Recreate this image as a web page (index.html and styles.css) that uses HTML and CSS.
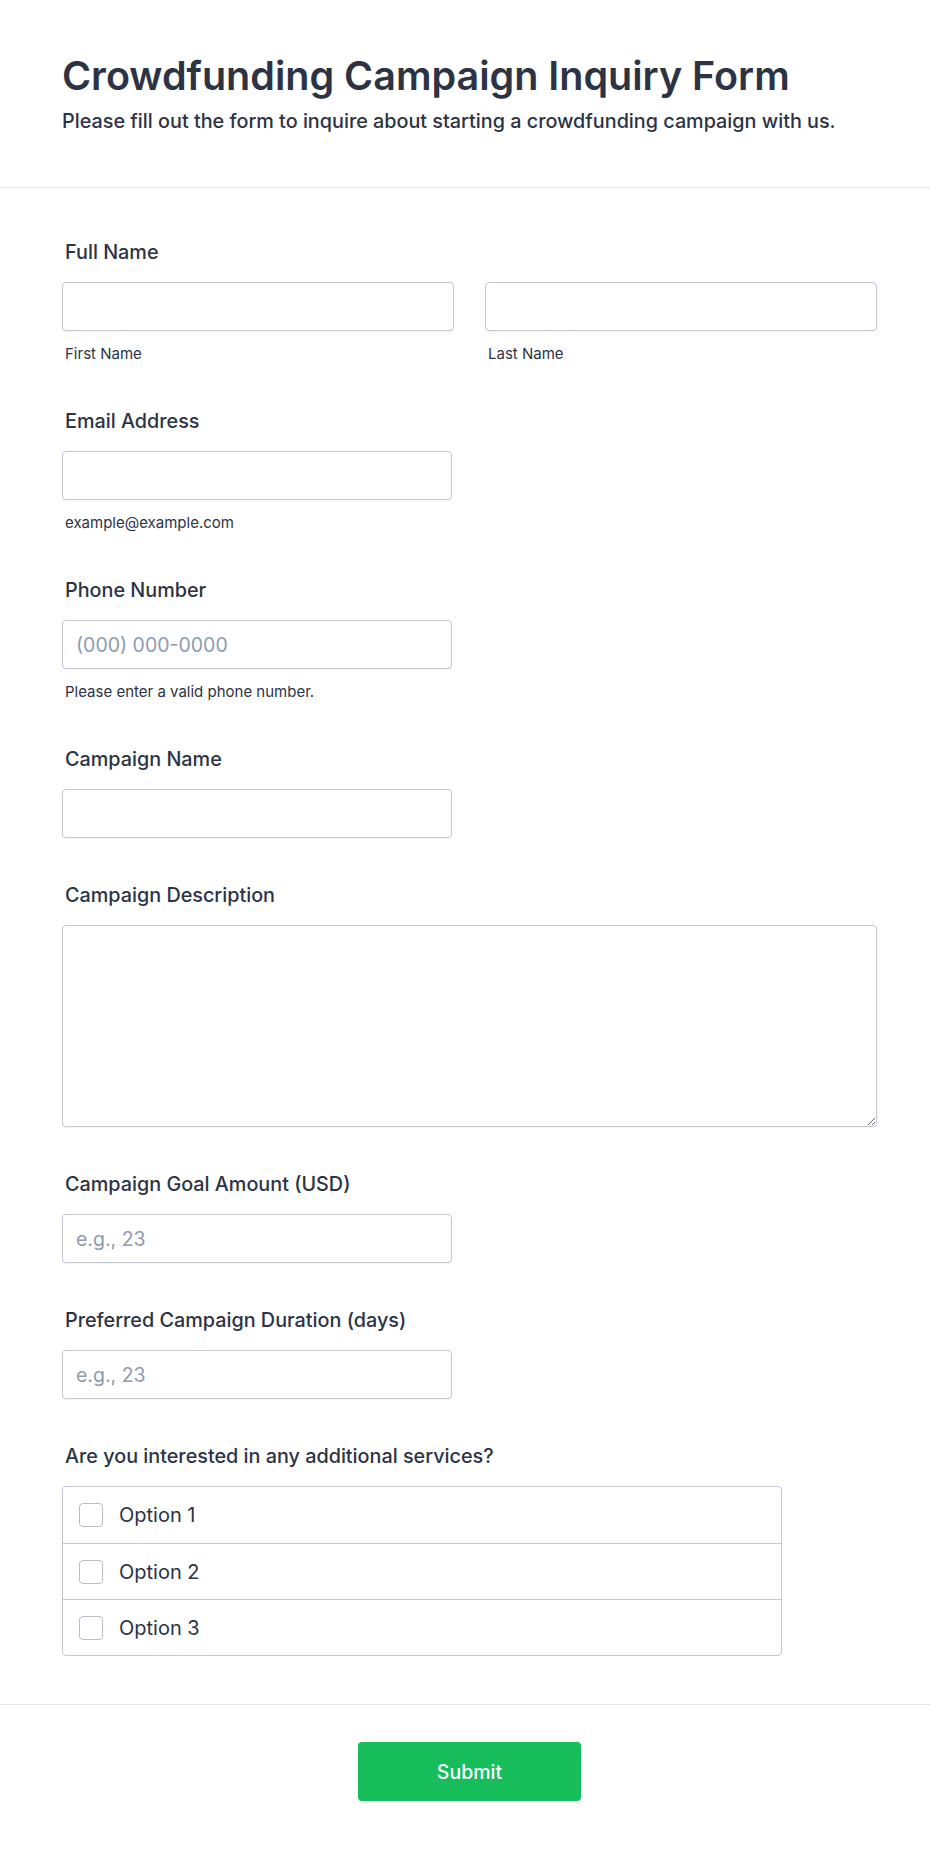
FILE: index.html
```html
<!DOCTYPE html>
<html lang="en">
<head>
  <meta charset="UTF-8" />
  <meta name="viewport" content="width=device-width, initial-scale=1.0"/>
  <title>Crowdfunding Campaign Inquiry Form</title>
  <link rel="stylesheet" href="styles.css">
</head>
<body>

  <header class="form-header">
    <h1>Crowdfunding Campaign Inquiry Form</h1>
    <p>Please fill out the form to inquire about starting a crowdfunding campaign with us.</p>
  </header>

  <form class="form-body">
    <!-- Jméno -->
    <div class="field">
      <label class="field-label">Full Name</label>
      <div class="name-row">
        <div>
          <input type="text" id="firstName">
          <span class="sublabel">First Name</span>
        </div>
        <div>
          <input type="text" id="lastName">
          <span class="sublabel">Last Name</span>
        </div>
      </div>
    </div>

    <div class="field">
      <label class="field-label" for="email">Email Address</label>
      <input type="email" id="email" class="half">
      <span class="sublabel">example@example.com</span>
    </div>

    <div class="field">
      <label class="field-label" for="phone">Phone Number</label>
      <input type="tel" id="phone" class="half" placeholder="(000) 000-0000">
      <span class="sublabel">Please enter a valid phone number.</span>
    </div>

    <div class="field">
      <label class="field-label" for="campaignName">Campaign Name</label>
      <input type="text" id="campaignName" class="half">
    </div>

    <div class="field">
      <label class="field-label" for="description">Campaign Description</label>
      <textarea id="description"></textarea>
    </div>

    <div class="field">
      <label class="field-label" for="goal">Campaign Goal Amount (USD)</label>
      <input type="number" id="goal" class="half" placeholder="e.g., 23">
    </div>

    <div class="field">
      <label class="field-label" for="duration">Preferred Campaign Duration (days)</label>
      <input type="number" id="duration" class="half" placeholder="e.g., 23">
    </div>

    <div class="field">
      <label class="field-label">Are you interested in any additional services?</label>
      <div class="options">
        <label class="option"><input type="checkbox"><span>Option 1</span></label>
        <label class="option"><input type="checkbox"><span>Option 2</span></label>
        <label class="option"><input type="checkbox"><span>Option 3</span></label>
      </div>
    </div>
  </form>

  <!-- Odeslání -->
  <div class="form-footer">
    <button type="submit">Submit</button>
  </div>

</body>
</html>
```

FILE: styles.css
```css
* {
  margin: 0;
  padding: 0;
  box-sizing: border-box;
}

body {
  font-family: Inter, 'Noto Sans', sans-serif;
  color: #2c3345;
  background: #fff;
}

.form-header {
  padding: 52px 53px 52px 62px;
  border-bottom: 1px solid #e3e5ea;
}

.form-header h1 {
  font-size: 39.5px;
  line-height: 48px;
  font-weight: 600;
}

.form-header p {
  margin-top: 7px;
  font-size: 19.8px;
  line-height: 28px;
  font-weight: 500;
}

.form-body {
  display: flex;
  flex-direction: column;
  gap: 45px;
  padding: 52px 53px 48px 62px;
  border-bottom: 1px solid #e3e5ea;
}

.field {
  display: flex;
  flex-direction: column;
}

.field-label {
  padding-left: 3px;
  font-size: 19.8px;
  line-height: 24px;
  font-weight: 500;
  margin-bottom: 18px;
}

.name-row {
  display: grid;
  grid-template-columns: 1fr 1fr;
  gap: 31px;
}

.name-row > div {
  display: flex;
  flex-direction: column;
}

input[type="text"], input[type="email"], input[type="tel"], input[type="number"], textarea {
  width: 100%;
  height: 49px;
  padding: 0 13px;
  border: 1px solid #c3c6d4;
  border-radius: 4px;
  font-family: inherit;
  font-size: 19.5px;
  color: #2c3345;
  background: #fff;
  box-shadow: 0 1px 1px rgba(0, 0, 0, 0.05);
}

input.half {
  width: 390px;
}

input::placeholder {
  color: #8c9bb1;
}

textarea {
  height: 202px;
  padding: 12px 13px;
}

.sublabel {
  padding-left: 3px;
  margin-top: 13px;
  font-size: 15px;
  line-height: 20px;
}

.options {
  width: 720px;
  border: 1px solid #c3c6d4;
  border-radius: 4px;
}

.option {
  display: flex;
  align-items: center;
  height: 56px;
  padding: 0 16px;
  font-size: 20px;
}
.option + .option {
  border-top: 1px solid #c3c6d4;
}

.option input {
  appearance: none;
  width: 24px;
  height: 24px;
  margin-right: 16px;
  border: 1px solid #b8bdc9;
  border-radius: 4px;
  background: #fff;
}

.form-footer {
  display: flex;
  justify-content: center;
  padding: 37px 53px 50px 62px;
}

button {
  width: 223px;
  height: 59px;
  background: #18bd5b;
  color: #fff;
  border: none;
  border-radius: 4px;
  font-family: inherit;
  font-size: 19.5px;
  font-weight: 500;
  cursor: pointer;
}

button:hover {
  background: #16aa52;
}
```
